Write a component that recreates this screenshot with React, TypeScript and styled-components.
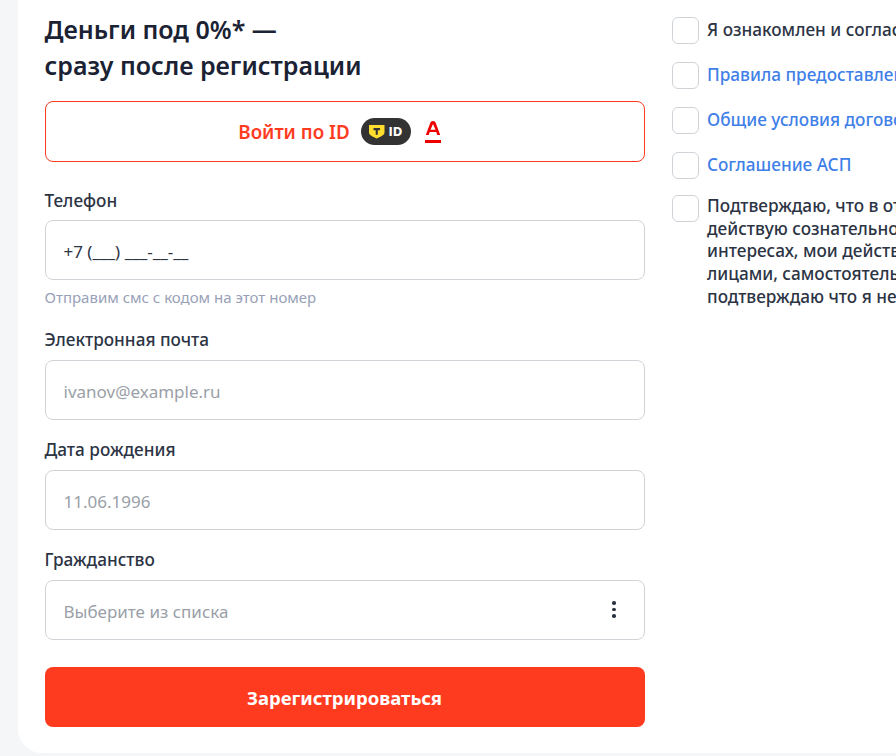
import styled, { createGlobalStyle } from "styled-components";

const GlobalStyle = createGlobalStyle`
  html, body {
    margin: 0;
    height: 756px;
    overflow: hidden;
    background: #f4f6f8;
    font-family: "Noto Sans", "Open Sans", sans-serif;
  }
`;

const Page = styled.div`
  width: 896px;
  height: 756px;
  overflow: hidden;
  padding-left: 18px;
  box-sizing: border-box;
`;

const Card = styled.main`
  width: 1000px;
  height: 753px;
  box-sizing: border-box;
  background: #fff;
  border-bottom-left-radius: 24px;
  padding: 11px 0 0 26.5px;
  display: flex;
  gap: 27.5px;
`;

const FormColumn = styled.section`
  width: 600px;
  flex: none;
  display: flex;
  flex-direction: column;
`;

const Title = styled.h1`
  margin: 0 0 18px;
  font-size: 25px;
  line-height: 36px;
  font-weight: 600;
  color: #1a2233;
`;

const IdButton = styled.button`
  height: 61px;
  border: 1px solid #ff3b1f;
  border-radius: 8px;
  background: #fff;
  display: flex;
  align-items: center;
  justify-content: center;
  gap: 11px;
  margin-bottom: 28px;
  padding: 0 10px 0 0;
  color: #ff3b1f;
  font: 600 18.8px "Noto Sans", sans-serif;
`;

const Field = styled.div`
  display: flex;
  flex-direction: column;
  margin-bottom: 19px;
`;

const PhoneField = styled(Field)`
  margin-bottom: 22px;
`;

const Label = styled.label`
  font-size: 17.2px;
  line-height: 22px;
  font-weight: 500;
  color: #2c3444;
  margin-bottom: 9px;
`;

const PhoneLabel = styled(Label)`
  margin-bottom: 8px;
`;

const InputBox = styled.div<{ $filled?: boolean }>`
  height: 60px;
  box-sizing: border-box;
  border: 1px solid #cfd3d8;
  border-radius: 8px;
  background: #fff;
  display: flex;
  align-items: center;
  justify-content: space-between;
  padding: 2px 28px 0 18px;
  font-size: 17px;
  color: ${(p) => (p.$filled ? "#2c3444" : "#9a9fa8")};
`;

const Hint = styled.div`
  font-size: 15px;
  line-height: 20px;
  margin-top: 7px;
  color: #98a1b8;
`;

const Dots = styled.span`
  display: flex;
  flex-direction: column;
  gap: 3px;
  margin-top: -3px;
  i {
    width: 3.5px;
    height: 3.5px;
    border-radius: 50%;
    background: #2c3444;
  }
`;

const Submit = styled.button`
  height: 60px;
  border: none;
  border-radius: 8px;
  background: #ff3b1f;
  color: #fff;
  font: 700 18.5px "Noto Sans", sans-serif;
  padding: 0;
  margin-top: 8px;
`;

const Consents = styled.aside`
  display: flex;
  flex-direction: column;
  gap: 18px;
  padding-top: 6px;
  min-width: 0;
`;

const ConsentRow = styled.div<{ $top?: boolean }>`
  display: flex;
  gap: 8px;
  align-items: ${(p) => (p.$top ? "flex-start" : "center")};
  margin-top: ${(p) => (p.$top ? -2 : 0)}px;
`;

const Box = styled.span`
  width: 27px;
  height: 27px;
  flex: none;
  box-sizing: border-box;
  border: 1px solid #cfd3d8;
  border-radius: 6px;
  background: #fff;
`;

const ConsentText = styled.div<{ $link?: boolean }>`
  font-size: 17.2px;
  line-height: 22.7px;
  font-weight: 500;
  white-space: nowrap;
  color: ${(p) => (p.$link ? "#3f80e8" : "#2c3444")};
`;

const TinkoffIdBadge = () => (
  <svg width="50" height="27" viewBox="0 0 50 27">
    <rect width="50" height="27" rx="13.5" fill="#333333" />
    <path d="M8 7h15.500v7.500c0 3.200-4.700 4.300-7.750 6-3.050-1.700-7.750-2.800-7.750-6z" fill="#ffdd2d" />
    <path d="M12.500 10h6.500v2.200h-2.200v4.500h-2.100v-4.500h-2.200z" fill="#333333" />
    <text x="27.500" y="18" fontFamily="DejaVu Sans, sans-serif" fontSize="11.500" fontWeight="700" fill="#ffffff">ID</text>
  </svg>
);

const AlfaMark = styled.svg`
  margin-left: 3px;
`;

const AlfaLogo = () => (
  <AlfaMark width="16" height="24" viewBox="0 0 16 24">
    <path d="M8 1c1.500 0 2.300.7 2.800 2L15.200 15h-3l-.9-3H4.700l-.9 3h-3L5.200 3C5.700 1.700 6.500 1 8 1zm0 3L5.500 9.800h5L8 4z" fill="#ef0000" />
    <rect y="20" width="16" height="3" fill="#ef0000" />
  </AlfaMark>
);

export default function App() {
  return (
    <Page>
      <GlobalStyle />
      <Card>
        <FormColumn>
          <Title>
            Деньги под 0%* —
            <br />
            сразу после регистрации
          </Title>
          <IdButton>
            Войти по ID
            <TinkoffIdBadge />
            <AlfaLogo />
          </IdButton>
          <PhoneField>
            <PhoneLabel>Телефон</PhoneLabel>
            <InputBox $filled>+7 (___) ___-__-__</InputBox>
            <Hint>Отправим смс с кодом на этот номер</Hint>
          </PhoneField>
          <Field>
            <Label>Электронная почта</Label>
            <InputBox>ivanov@example.ru</InputBox>
          </Field>
          <Field>
            <Label>Дата рождения</Label>
            <InputBox>11.06.1996</InputBox>
          </Field>
          <Field>
            <Label>Гражданство</Label>
            <InputBox>
              Выберите из списка
              <Dots>
                <i />
                <i />
                <i />
              </Dots>
            </InputBox>
          </Field>
          <Submit>Зарегистрироваться</Submit>
        </FormColumn>
        <Consents>
          <ConsentRow>
            <Box />
            <ConsentText>Я ознакомлен и согласен</ConsentText>
          </ConsentRow>
          <ConsentRow>
            <Box />
            <ConsentText $link>Правила предоставления</ConsentText>
          </ConsentRow>
          <ConsentRow>
            <Box />
            <ConsentText $link>Общие условия договора</ConsentText>
          </ConsentRow>
          <ConsentRow>
            <Box />
            <ConsentText $link>Соглашение АСП</ConsentText>
          </ConsentRow>
          <ConsentRow $top>
            <Box />
            <ConsentText>
              Подтверждаю, что в отношении
              <br />
              действую сознательно
              <br />
              интересах, мои действия
              <br />
              лицами, самостоятельно
              <br />
              подтверждаю что я не
            </ConsentText>
          </ConsentRow>
        </Consents>
      </Card>
    </Page>
  );
}
